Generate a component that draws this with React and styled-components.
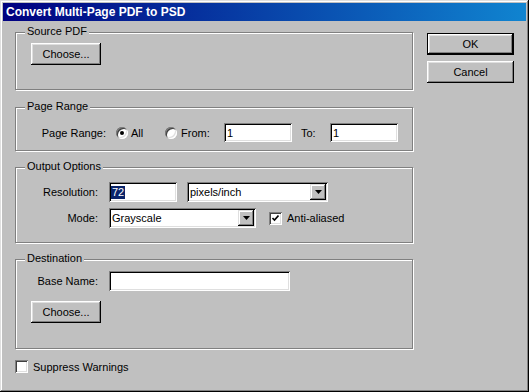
import React from "react";
import styled, { createGlobalStyle } from "styled-components";

const GlobalStyle = createGlobalStyle`
  html, body {
    margin: 0;
    padding: 0;
    background: #c0c0c0;
  }
  body {
    font-family: "Liberation Sans", Arial, sans-serif;
    font-size: 11px;
    color: #000;
  }
`;

const Window = styled.div`
  width: 529px;
  height: 392px;
  box-sizing: border-box;
  padding: 3px;
  background: #c0c0c0;
  box-shadow: inset -1px -1px 0 #000, inset 1px 1px 0 #dfdfdf,
    inset -2px -2px 0 #808080, inset 2px 2px 0 #fff;
  display: flex;
  flex-direction: column;
`;

const TitleBar = styled.div`
  height: 18px;
  display: flex;
  align-items: center;
  padding-left: 3px;
  background: linear-gradient(to right, #000080, #1084d0);
  color: #fff;
  font-weight: bold;
  font-size: 12px;
`;

const Body = styled.div`
  display: flex;
  padding: 11px 0 0 12px;
`;

const LeftColumn = styled.div`
  display: flex;
  flex-direction: column;
  width: 399px;
`;

const RightColumn = styled.div`
  display: flex;
  flex-direction: column;
  gap: 6px;
  margin-left: 13px;
  padding-top: 1px;
`;

const GroupBox = styled.div`
  position: relative;
  width: 398px;
  height: ${(p) => p.$h}px;
  box-sizing: border-box;
  margin-top: ${(p) => p.$mt || 0}px;
  border: 1px solid #808080;
  box-shadow: 1px 1px 0 #fff, inset 1px 1px 0 #fff;
  padding: ${(p) => p.$pad};
`;

const Legend = styled.span`
  position: absolute;
  top: -8px;
  left: 9px;
  padding: 0 2px;
  background: #c0c0c0;
  line-height: 13px;
`;

const Button = styled.button`
  font-family: "Liberation Sans", Arial, sans-serif;
  font-size: 11px;
  color: #000;
  width: ${(p) => p.$w}px;
  height: 22px;
  box-sizing: border-box;
  margin: 0;
  padding: 0;
  border: ${(p) => (p.$default ? "1px solid #000" : "none")};
  background: #c0c0c0;
  box-shadow: inset -1px -1px 0 #000, inset 1px 1px 0 #fff,
    inset -2px -2px 0 #808080, inset 2px 2px 0 #dfdfdf;
  outline: none;
`;

const Row = styled.div`
  display: flex;
  align-items: center;
  margin-top: ${(p) => p.$mt || 0}px;
  padding-left: ${(p) => p.$pl || 0}px;
`;

const Label = styled.span`
  width: ${(p) => p.$w}px;
  text-align: right;
  flex: none;
`;

const Text = styled.span`
  margin-left: ${(p) => p.$ml || 0}px;
  width: ${(p) => (p.$w ? `${p.$w}px` : "auto")};
  flex: none;
`;

const Field = styled.div`
  width: ${(p) => p.$w}px;
  height: ${(p) => p.$h || 20}px;
  margin-left: ${(p) => p.$ml || 0}px;
  box-sizing: border-box;
  background: #fff;
  box-shadow: inset 1px 1px 0 #808080, inset -1px -1px 0 #fff,
    inset 2px 2px 0 #000, inset -2px -2px 0 #dfdfdf;
  display: flex;
  align-items: center;
  padding: 0 2px 0 3px;
  flex: none;
`;

const Selected = styled.span`
  background: #0a246a;
  color: #fff;
  line-height: 13px;
  padding: 0 1px;
  margin-left: -1px;
`;

const FieldText = styled.span`
  flex: 1;
`;

const DropButton = styled.div`
  width: 16px;
  height: 16px;
  box-sizing: border-box;
  background: #c0c0c0;
  box-shadow: inset -1px -1px 0 #000, inset 1px 1px 0 #dfdfdf,
    inset -2px -2px 0 #808080, inset 2px 2px 0 #fff;
  display: flex;
  align-items: center;
  justify-content: center;
`;

const Radio = styled.span`
  width: 12px;
  height: 12px;
  border-radius: 50%;
  background: #fff;
  box-shadow: inset 1px 1px 0 #808080, inset -1px -1px 0 #fff,
    inset 2px 2px 0 #404040, inset -2px -2px 0 #dfdfdf;
  margin-left: ${(p) => p.$ml || 0}px;
  flex: none;
  display: flex;
  align-items: center;
  justify-content: center;

  &::after {
    content: "";
    display: ${(p) => (p.$checked ? "block" : "none")};
    width: 4px;
    height: 4px;
    border-radius: 50%;
    background: #000;
  }
`;

const Check = styled.span`
  width: 13px;
  height: 13px;
  box-sizing: border-box;
  background: #fff;
  box-shadow: inset 1px 1px 0 #808080, inset -1px -1px 0 #fff,
    inset 2px 2px 0 #404040, inset -2px -2px 0 #dfdfdf;
  margin-left: ${(p) => p.$ml || 0}px;
  flex: none;
  display: flex;
  align-items: center;
  justify-content: center;
`;

const SuppressRow = styled(Row)`
  margin-top: 11px;
`;

function Select({ w, ml, value }) {
  return (
    <Field $w={w} $ml={ml}>
      <FieldText>{value}</FieldText>
      <DropButton>
        <svg width="7" height="4" viewBox="0 0 7 4">
          <path d="M0 0h7L3.5 4z" fill="#000" />
        </svg>
      </DropButton>
    </Field>
  );
}

function CheckBox({ checked, ml }) {
  return (
    <Check $ml={ml}>
      {checked && (
        <svg width="7" height="7" viewBox="0 0 7 7">
          <path d="M0.5 3l2 2 4-4.5" stroke="#000" strokeWidth="1.6" fill="none" />
        </svg>
      )}
    </Check>
  );
}

export default function App() {
  return (
    <>
      <GlobalStyle />
      <Window>
        <TitleBar>Convert Multi-Page PDF to PSD</TitleBar>
        <Body>
          <LeftColumn>
            <GroupBox $h={58} $pad="10px 0 0 15px">
              <Legend>Source PDF</Legend>
              <Button $w={70}>Choose...</Button>
            </GroupBox>

            <GroupBox $h={44} $mt={17} $pad="15px 0 0 0">
              <Legend>Page Range</Legend>
              <Row>
                <Label $w={90}>Page Range:</Label>
                <Radio $checked $ml={10} />
                <Text $ml={3} $w={34}>All</Text>
                <Radio />
                <Text $ml={4} $w={43}>From:</Text>
                <Field $w={68} $h={19}>1</Field>
                <Text $ml={9} $w={29}>To:</Text>
                <Field $w={68} $h={19}>1</Field>
              </Row>
            </GroupBox>

            <GroupBox $h={76} $mt={16} $pad="14px 0 0 0">
              <Legend>Output Options</Legend>
              <Row>
                <Label $w={82}>Resolution:</Label>
                <Field $w={68} $ml={11}>
                  <Selected>72</Selected>
                </Field>
                <Select w={141} ml={10} value="pixels/inch" />
              </Row>
              <Row $mt={6}>
                <Label $w={82}>Mode:</Label>
                <Select w={147} ml={11} value="Grayscale" />
                <CheckBox checked ml={13} />
                <Text $ml={5}>Anti-aliased</Text>
              </Row>
            </GroupBox>

            <GroupBox $h={90} $mt={16} $pad="11px 0 0 0">
              <Legend>Destination</Legend>
              <Row>
                <Label $w={82}>Base Name:</Label>
                <Field $w={181} $ml={11} />
              </Row>
              <Row $mt={10} $pl={15}>
                <Button $w={70}>Choose...</Button>
              </Row>
            </GroupBox>

            <SuppressRow>
              <CheckBox />
              <Text $ml={5}>Suppress Warnings</Text>
            </SuppressRow>
          </LeftColumn>
          <RightColumn>
            <Button $w={87} $default>
              OK
            </Button>
            <Button $w={87}>Cancel</Button>
          </RightColumn>
        </Body>
      </Window>
    </>
  );
}
